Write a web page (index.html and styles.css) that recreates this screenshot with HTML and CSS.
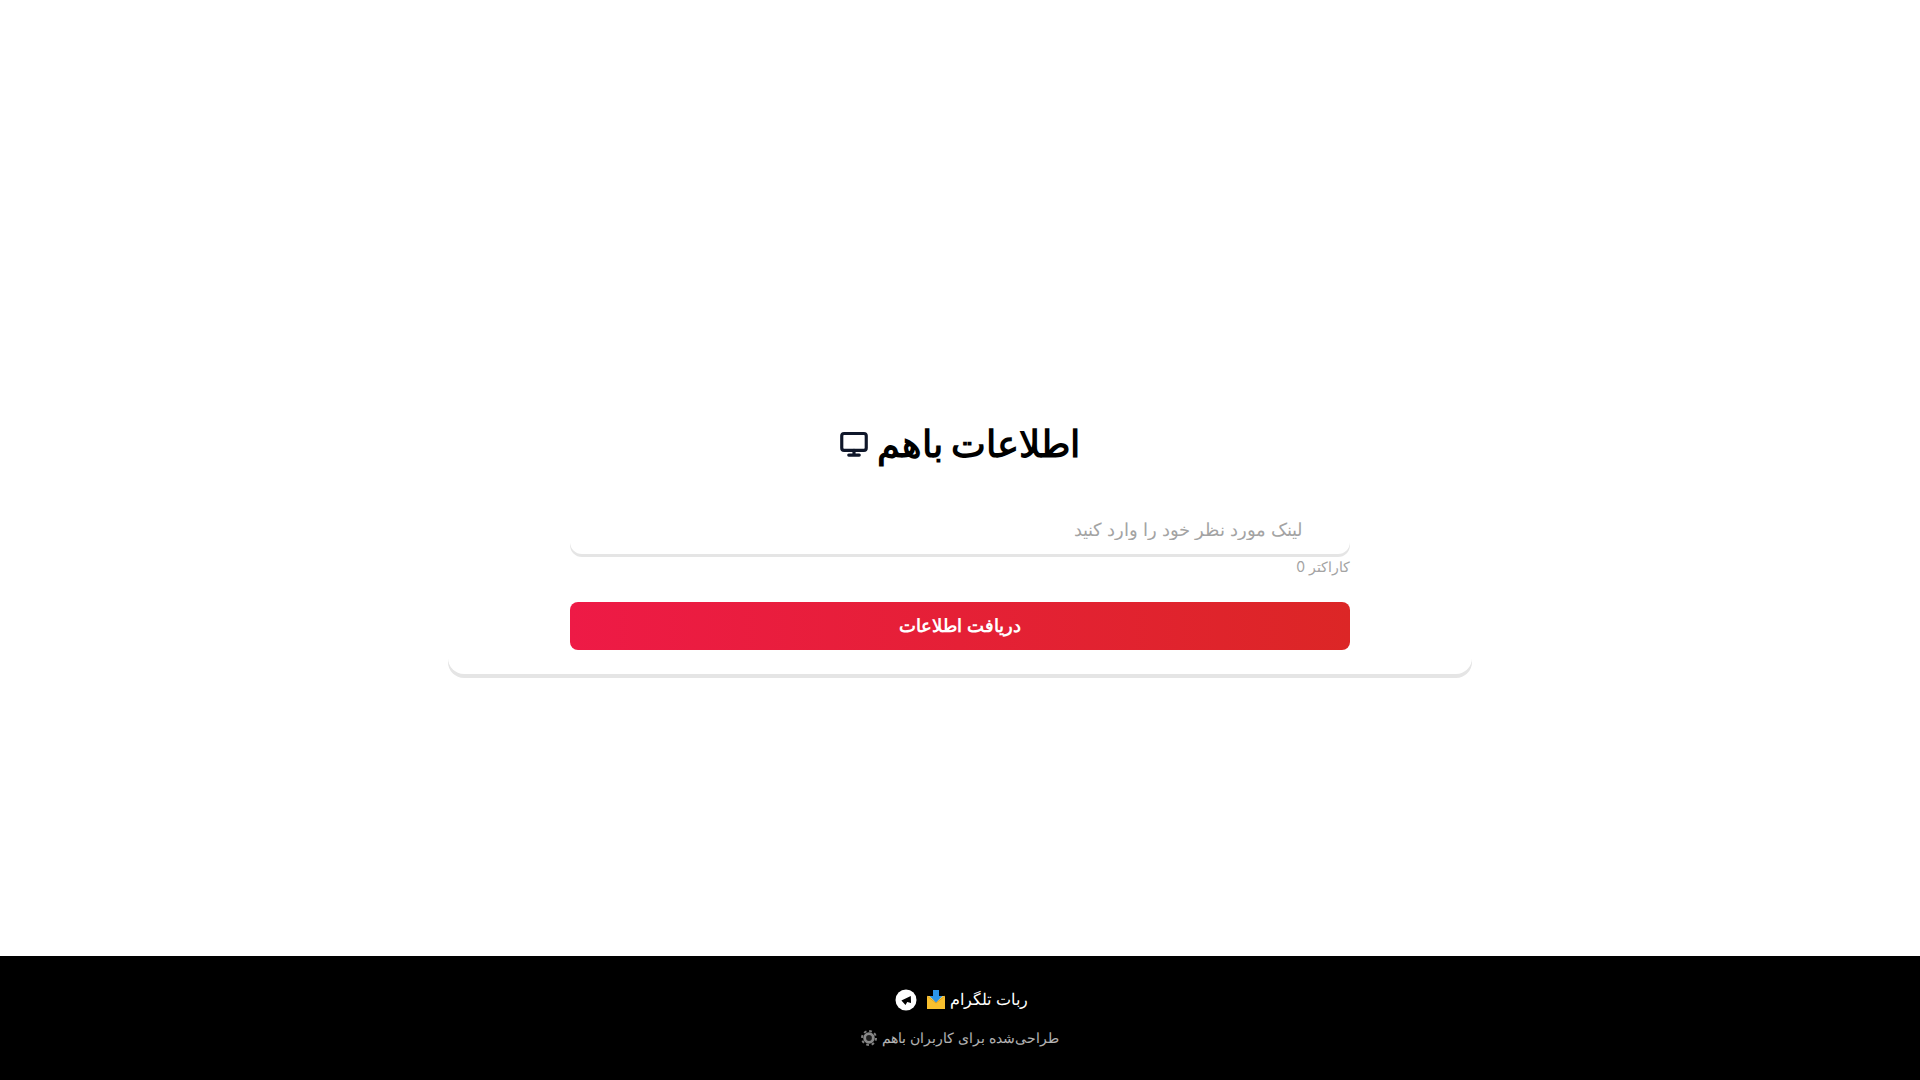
FILE: index.html
```html
<!DOCTYPE html>
<html lang="fa" dir="rtl">
<head>
<meta charset="utf-8">
<title>اطلاعات باهم</title>
<link rel="stylesheet" href="styles.css">
</head>
<body>
<main class="main">
  <section class="card">
    <h1 class="title">اطلاعات باهم
      <svg class="title-icon" viewBox="0 0 24 24" fill="none" stroke="#0f172a" stroke-width="2.7" stroke-linecap="round" stroke-linejoin="round" aria-hidden="true">
        <rect x="1.5" y="3" width="21" height="14.5" rx="2"/>
        <path d="M12 17.5v3.5M7.5 21.5h9"/>
      </svg>
    </h1>
    <form class="form">
      <div class="field">
        <input class="input" type="text" placeholder="لینک مورد نظر خود را وارد کنید">
        <div class="counter">کاراکتر 0</div>
      </div>
      <button class="button" type="button">دریافت اطلاعات</button>
    </form>
  </section>
</main>
<footer class="footer">
  <a class="bot-link">
    <span class="bot-label">ربات تلگرام</span>
    <svg class="inbox-icon" viewBox="0 0 20 20" aria-hidden="true">
      <path d="M1 6h18v13H1z" fill="#f9c02e"/>
      <path d="M1 6l9 7 9-7" fill="#fbd358" stroke="#e0a020" stroke-width="1"/>
      <path d="M7 0h6v6h3.5L10 12.5 3.5 6H7z" fill="#2b95e9"/>
    </svg>
    <svg class="tg-icon" viewBox="0 0 24 24" aria-hidden="true">
      <circle cx="12" cy="12" r="10.5" fill="#fff"/>
      <path d="M7.4 12.5 16.8 8 17 15 13.2 14 11.5 17z" fill="#000"/>
    </svg>
  </a>
  <p class="credit">
    <span>طراحی‌شده برای کاربران باهم</span>
    <svg class="gear-icon" viewBox="0 0 20 20" aria-hidden="true">
      <circle cx="10" cy="10" r="8.8" fill="none" stroke="#b5b5b5" stroke-width="2.4" stroke-dasharray="3.45 3.46"/>
      <circle cx="10" cy="10" r="5.4" fill="#2a2a2a" stroke="#c4c4c4" stroke-width="3.6"/>
    </svg>
  </p>
</footer>
</body>
</html>
```
FILE: styles.css
```css
* { box-sizing: border-box; }
html, body { margin: 0; height: 100%; }
body {
  display: flex;
  flex-direction: column;
  min-height: 100vh;
  background: #fff;
  color: #000;
  font-family: Inter, sans-serif;
}
.main {
  flex: 1;
  display: flex;
  justify-content: center;
  align-items: flex-end;
  padding-bottom: 282px;
}
.card {
  width: 1024px;
  padding: 0 122px 24px;
  background: #fff;
  border-radius: 16px;
  box-shadow: 0 4px 0 #e5e5e5;
}
.title {
  margin: 0 0 41px;
  display: flex;
  justify-content: center;
  align-items: center;
  gap: 9px;
  font-size: 36.5px;
  line-height: 40px;
  font-weight: 800;
}
.title-icon { width: 28px; height: 28px; }
.form { display: flex; flex-direction: column; gap: 24px; }
.input {
  display: block;
  width: 100%;
  height: 49px;
  padding: 0 48px 1px;
  border: 0;
  outline: 0;
  border-radius: 12px;
  background: #fff;
  box-shadow: 0 3px 0 #e5e5e5;
  font: 18px Inter, sans-serif;
  direction: rtl;
}
.input::placeholder { color: #a3a3a3; opacity: 1; }
.counter {
  margin-top: 3px;
  margin-bottom: 1px;
  font-size: 14px;
  line-height: 20px;
  color: #a3a3a3;
}
.button {
  height: 48px;
  padding: 0 0 2px;
  border: 0;
  border-radius: 8px;
  color: #fff;
  font: 700 18px Inter, sans-serif;
  background: linear-gradient(to left, #dc2626, #ee1a46);
}
.footer {
  height: 124px;
  padding-top: 32px;
  background: #000;
  color: #fff;
  text-align: center;
}
.bot-link {
  display: inline-flex;
  align-items: center;
  gap: 4px;
  padding-left: 2px;
  font-size: 16px;
  line-height: 22px;
  height: 24px;
}
.bot-label { padding-bottom: 2px; }
.inbox-icon { width: 20px; height: 20px; margin-left: 4px; }
.tg-icon { width: 24px; height: 24px; }
.credit {
  display: flex;
  justify-content: center;
  align-items: center;
  gap: 5px;
  margin: 16px 0 0;
  font-size: 14px;
  line-height: 20px;
  color: #fff;
  opacity: 0.7;
}
.gear-icon { width: 16px; height: 16px; }
```
